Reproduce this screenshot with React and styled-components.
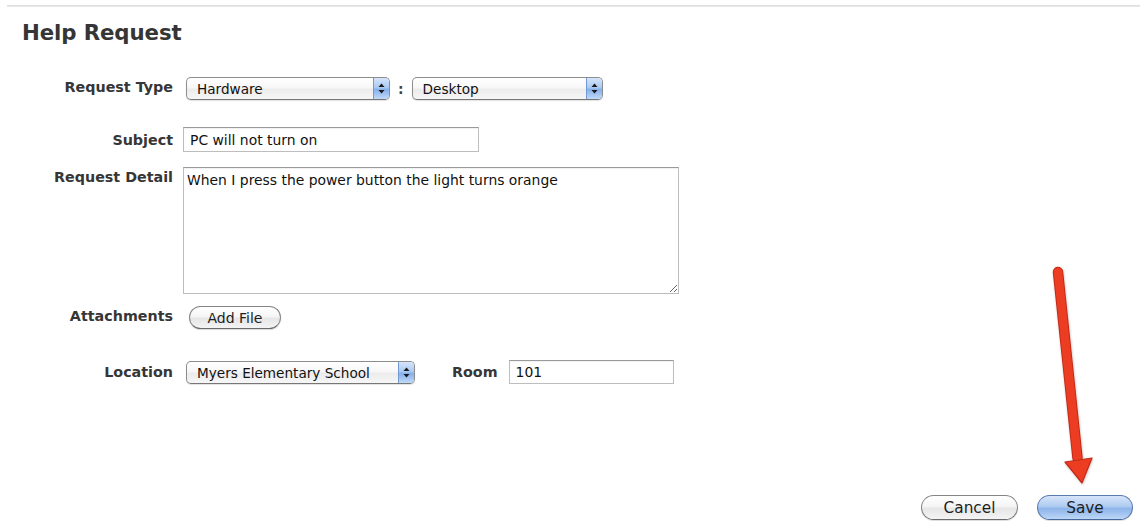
import React from "react";
import styled, { createGlobalStyle, css } from "styled-components";

const Global = createGlobalStyle`
  html, body {
    margin: 0;
    padding: 0;
    background: #ffffff;
  }
  body {
    font-family: "DejaVu Sans", "Liberation Sans", sans-serif;
    color: #333333;
  }
  * { box-sizing: border-box; }
`;

const Page = styled.div`
  position: relative;
  width: 1140px;
  height: 521px;
  overflow: hidden;
  padding-top: 5px;
`;

const TopRule = styled.div`
  margin-left: 7px;
  height: 2px;
  background: linear-gradient(#d9d9d9, #ececec);
`;

const Title = styled.h1`
  margin: 14px 0 0 22px;
  font-size: 21.3px;
  line-height: 24px;
  font-weight: bold;
  color: #353535;
  letter-spacing: -0.1px;
`;

const Form = styled.div`
  display: flex;
  flex-direction: column;
  padding-left: 7px;
`;

const Row = styled.div`
  display: grid;
  grid-template-columns: 166px auto;
  column-gap: 10px;
  align-items: ${(p) => p.$align || "center"};
  margin-top: ${(p) => p.$top}px;
`;

const Label = styled.div`
  text-align: right;
  font-size: 14.3px;
  line-height: 16px;
  font-weight: bold;
  color: #363636;
  padding-top: ${(p) => p.$pad || 0}px;
  padding-bottom: ${(p) => p.$lift || 0}px;
`;

const InlineLabel = styled(Label)`
  margin: 0 11px 0 37px;
`;

const Controls = styled.div`
  display: flex;
  align-items: center;
`;

const SelectBox = styled.div`
  display: flex;
  align-items: stretch;
  width: ${(p) => p.$width}px;
  height: 23px;
  margin-left: 3px;
  border: 1px solid #8d8d8d;
  border-bottom-color: #777;
  border-radius: 5px;
  background: linear-gradient(#ffffff 0%, #f7f7f7 45%, #ececec 55%, #f6f6f6 100%);
  box-shadow: 0 1px 1px rgba(0, 0, 0, 0.12);
  overflow: hidden;
`;

const SelectValue = styled.span`
  flex: 1;
  padding-left: 10px;
  font-size: 13.6px;
  line-height: 22px;
  color: #111;
  white-space: nowrap;
`;

const Stepper = styled.span`
  width: 16px;
  display: flex;
  align-items: center;
  justify-content: center;
  border-left: 1px solid #7399d3;
  background: linear-gradient(#d6e5fa 0%, #abcaf2 45%, #86b0ec 55%, #c0d9f8 100%);
`;

const Colon = styled.span`
  margin: 0 5px 0 8px;
  font-size: 14px;
  font-weight: bold;
  color: #444;
`;

const textField = css`
  font-family: "DejaVu Sans", "Liberation Sans", sans-serif;
  font-size: 13.9px;
  color: #111;
  background: #fff;
  border: 1px solid #bdbdbd;
  border-top-color: #9a9a9a;
  box-shadow: inset 0 1px 1px rgba(0, 0, 0, 0.06);
  outline: none;
  border-radius: 0;
`;

const TextInput = styled.input`
  ${textField};
  width: ${(p) => p.$width}px;
  height: ${(p) => p.$height || 25}px;
  padding: 0 6px;
`;

const TextArea = styled.textarea`
  ${textField};
  width: 496px;
  height: 127px;
  padding: 3px 3px;
  line-height: 18px;
  resize: both;
  display: block;
`;

const PillButton = styled.button`
  font-family: "DejaVu Sans", "Liberation Sans", sans-serif;
  width: ${(p) => p.$width}px;
  height: ${(p) => p.$height}px;
  font-size: ${(p) => p.$size}px;
  margin-left: ${(p) => p.$offset || 0}px;
  padding: 0;
  color: #1e1e1e;
  border-radius: 13px;
  border: 1px solid #858585;
  border-bottom-color: #6a6a6a;
  background: linear-gradient(#ffffff 0%, #f5f5f5 45%, #e6e6e6 55%, #f4f4f4 100%);
  box-shadow: 0 1px 1px rgba(0, 0, 0, 0.15);
  ${(p) =>
    p.$primary &&
    css`
      border-color: #5a7bb0;
      border-bottom-color: #47679a;
      background: linear-gradient(#d6e5f9 0%, #afcbf1 45%, #8db4ea 55%, #bcd6f6 100%);
    `}
`;

const Footer = styled.div`
  display: flex;
  justify-content: flex-end;
  gap: 19px;
  margin-top: 111px;
  padding-right: 7px;
`;

const Pointer = styled.svg`
  position: absolute;
  left: 1040px;
  top: 260px;
`;

function UpDown() {
  return (
    <svg width="7" height="11" viewBox="0 0 7 11">
      <path d="M3.5 0.5 L6.5 4 L0.5 4 Z" fill="#1a1a1a" />
      <path d="M3.5 10.5 L6.5 7 L0.5 7 Z" fill="#1a1a1a" />
    </svg>
  );
}

function Select({ width, value }) {
  return (
    <SelectBox $width={width}>
      <SelectValue>{value}</SelectValue>
      <Stepper>
        <UpDown />
      </Stepper>
    </SelectBox>
  );
}

export default function App() {
  return (
    <>
      <Global />
      <Page>
        <TopRule />
        <Title>Help Request</Title>
        <Form>
          <Row $top={32}>
            <Label $lift={3}>Request Type</Label>
            <Controls>
              <Select width={204} value="Hardware" />
              <Colon>:</Colon>
              <Select width={191} value="Desktop" />
            </Controls>
          </Row>
          <Row $top={27}>
            <Label>Subject</Label>
            <Controls>
              <TextInput $width={296} defaultValue="PC will not turn on" />
            </Controls>
          </Row>
          <Row $top={15} $align="start">
            <Label $pad={2}>Request Detail</Label>
            <TextArea defaultValue="When I press the power button the light turns orange" />
          </Row>
          <Row $top={12}>
            <Label $lift={4}>Attachments</Label>
            <Controls>
              <PillButton $width={92} $height={23} $size={14} $offset={6}>
                Add File
              </PillButton>
            </Controls>
          </Row>
          <Row $top={31}>
            <Label>Location</Label>
            <Controls>
              <Select width={229} value="Myers Elementary School" />
              <InlineLabel as="span">Room</InlineLabel>
              <TextInput $width={165} $height={24} defaultValue="101" />
            </Controls>
          </Row>
        </Form>
        <Footer>
          <PillButton $width={97} $height={25} $size={15.3}>
            Cancel
          </PillButton>
          <PillButton $primary $width={96} $height={25} $size={15.3}>
            Save
          </PillButton>
        </Footer>
        <Pointer width="70" height="240" viewBox="0 0 70 240">
          <defs>
            <filter id="arrowShade" x="-30%" y="-10%" width="160%" height="120%">
              <feDropShadow dx="0.5" dy="1" stdDeviation="1" floodColor="#000" floodOpacity="0.25" />
            </filter>
          </defs>
          <g filter="url(#arrowShade)">
            <path d="M18 12 L37.5 198" stroke="#c22a18" strokeWidth="10.5" strokeLinecap="round" fill="none" />
            <path d="M18 12 L37.5 198" stroke="#ec3d24" strokeWidth="8.5" strokeLinecap="round" fill="none" />
            <path
              d="M25 202 L52 198 L42 223 Z"
              fill="#ec3d24"
              stroke="#c22a18"
              strokeWidth="1.2"
              strokeLinejoin="round"
            />
          </g>
        </Pointer>
      </Page>
    </>
  );
}
